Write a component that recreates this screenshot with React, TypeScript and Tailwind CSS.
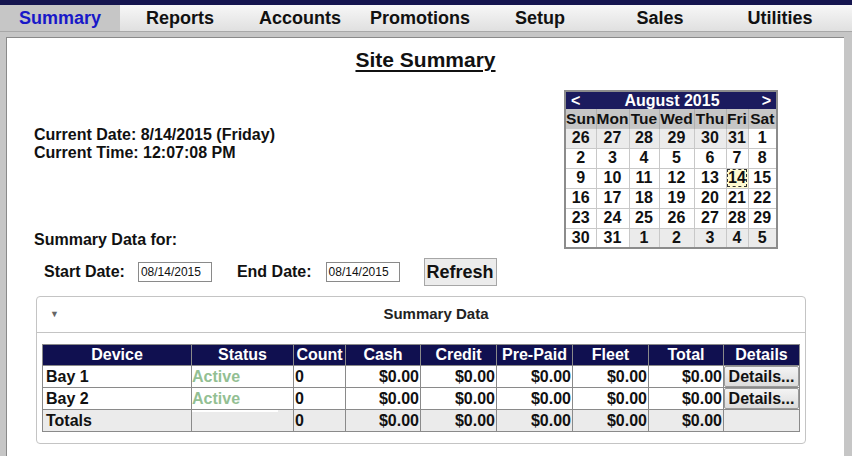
import React from 'react';

const tabs = ['Summary', 'Reports', 'Accounts', 'Promotions', 'Setup', 'Sales', 'Utilities'];

const dayNames = ['Sun', 'Mon', 'Tue', 'Wed', 'Thu', 'Fri', 'Sat'];
const calWidths = ['w-[31px]', 'w-[33px]', 'w-[30px]', 'w-[35px]', 'w-[32px]', 'w-[22px]', 'w-[29px]'];

// [day, otherMonth]
const weeks: [number, boolean][][] = [
  [[26, true], [27, true], [28, true], [29, true], [30, true], [31, true], [1, false]],
  [[2, false], [3, false], [4, false], [5, false], [6, false], [7, false], [8, false]],
  [[9, false], [10, false], [11, false], [12, false], [13, false], [14, false], [15, false]],
  [[16, false], [17, false], [18, false], [19, false], [20, false], [21, false], [22, false]],
  [[23, false], [24, false], [25, false], [26, false], [27, false], [28, false], [29, false]],
  [[30, false], [31, false], [1, true], [2, true], [3, true], [4, true], [5, true]],
];

const columns = [
  { label: 'Device', w: 'w-[149px]' },
  { label: 'Status', w: 'w-[102px]' },
  { label: 'Count', w: 'w-[52px]' },
  { label: 'Cash', w: 'w-[75px]' },
  { label: 'Credit', w: 'w-[76px]' },
  { label: 'Pre-Paid', w: 'w-[76px]' },
  { label: 'Fleet', w: 'w-[76px]' },
  { label: 'Total', w: 'w-[75px]' },
  { label: 'Details', w: 'w-[76px]' },
];

const Calendar: React.FC = () => (
  <table className="border-collapse border-2 border-[#8c8c8c] text-[16px] font-bold leading-none table-fixed">
    <colgroup>
      {calWidths.map((w, i) => (
        <col key={i} className={w} />
      ))}
    </colgroup>
    <tbody>
      <tr className="h-[18px] bg-[#1b1b5e] text-white">
        <td className="pl-[5px] text-left">&lt;</td>
        <td colSpan={5} className="text-center">August 2015</td>
        <td className="pr-[5px] text-right">&gt;</td>
      </tr>
      <tr className="h-[19px] bg-[#c6c6c6] text-[#111] text-[15.5px]">
        {dayNames.map((d) => (
          <td key={d} className="text-center px-0 border-x border-[#b0b0b0] whitespace-nowrap">{d}</td>
        ))}
      </tr>
      {weeks.map((week, wi) => (
        <tr key={wi} className="h-[20px]">
          {week.map(([day, other], di) => {
            const selected = day === 14 && !other;
            return (
              <td
                key={di}
                className={`text-center border border-[#c8c8c8] text-[#111] ${
                  selected
                    ? 'bg-[#fffbd0] outline-1 outline-dashed outline-[#333] -outline-offset-2'
                    : other
                    ? 'bg-[#ebebeb]'
                    : 'bg-white'
                }`}
              >
                {day}
              </td>
            );
          })}
        </tr>
      ))}
    </tbody>
  </table>
);

const BayRow: React.FC<{ name: string }> = ({ name }) => (
  <tr className="h-[22px] bg-white">
    <td className="border border-[#8a8a8a] pl-[3px] text-left">{name}</td>
    <td className="border border-[#8a8a8a] text-left text-[#93bf93]">Active</td>
    <td className="border border-[#8a8a8a] text-left pl-[1px]">0</td>
    {[0, 1, 2, 3, 4].map((i) => (
      <td key={i} className="border border-[#8a8a8a] text-right pr-[1px]">$0.00</td>
    ))}
    <td className="border border-[#8a8a8a] p-0">
      <button className="w-full h-[21px] bg-gradient-to-b from-[#f4f4f4] to-[#dcdcdc] border border-[#9a9a9a] rounded-[2px] font-bold text-[16px] text-[#111] leading-none">
        Details...
      </button>
    </td>
  </tr>
);

export default function App() {
  return (
    <div className="w-[852px] h-[456px] overflow-hidden bg-[#c6c6c6] flex flex-col font-['Liberation_Sans',Arial,sans-serif] text-[#111]">
      {/* top bar */}
      <div className="h-[5px] bg-[#15154f]" />

      {/* tabs */}
      <div className="flex h-[27px] bg-gradient-to-b from-[#f7f7f7] to-[#e0e0e0] border-b border-[#a8a8a8] pr-[12px]">
        {tabs.map((t, i) => (
          <div
            key={t}
            className={`w-[120px] text-center text-[18px] font-bold leading-[26px] ${
              i === 0 ? 'bg-[#c6c6c6] text-[#1818c8]' : 'text-[#111]'
            }`}
          >
            {t}
          </div>
        ))}
      </div>

      {/* frame */}
      <div className="flex-1 pl-[6px] pr-[8px] pt-[5px] min-h-0">
        <div className="h-full bg-white border-l border-t border-[#8a8a8a]">
          <h1 className="text-center text-[21px] font-bold underline underline-offset-[3px] pt-[10px] leading-[24px]">
            Site Summary
          </h1>

          <div className="flex justify-between pr-[66px] mt-[18px]">
            <div className="pl-[27px] text-[16px] font-bold leading-[19px] flex flex-col">
              <div className="mt-[35px]">Current Date: 8/14/2015 (Friday)</div>
              <div className="mt-[-1px]">Current Time: 12:07:08 PM</div>
              <div className="mt-[68px]">Summary Data for:</div>
            </div>
            <Calendar />
          </div>

          {/* date range */}
          <div className="flex items-center pl-[37px] mt-[9px] text-[16px] font-bold">
            <span>Start Date:</span>
            <div className="ml-[13px] w-[74px] h-[20px] border border-[#8a8a8a] text-[12px] font-normal leading-[18px] pl-[2px]">
              08/14/2015
            </div>
            <span className="ml-[25px]">End Date:</span>
            <div className="ml-[14px] w-[74px] h-[20px] border border-[#8a8a8a] text-[12px] font-normal leading-[18px] pl-[2px]">
              08/14/2015
            </div>
            <button className="ml-[24px] w-[73px] h-[28px] bg-[#ececec] border border-[#a6a6a6] text-[18px] font-bold leading-none text-[#111]">
              Refresh
            </button>
          </div>

          {/* summary data panel */}
          <div className="ml-[29px] mt-[10px] w-[770px] h-[148px] border border-[#c4c4c4] rounded-[4px]">
            <div className="flex items-center h-[36px] border-b border-[#c4c4c4]">
              <span className="ml-[13px] text-[#666] text-[9px] leading-none">▼</span>
              <span className="flex-1 text-center text-[15px] font-bold text-[#222] pl-[8px]">Summary Data</span>
            </div>
            <table className="ml-[5px] mt-[11px] border-collapse table-fixed w-[757px] text-[16px] font-bold leading-none">
              <colgroup>
                {columns.map((c) => (
                  <col key={c.label} className={c.w} />
                ))}
              </colgroup>
              <thead>
                <tr className="h-[21px] bg-[#101050] text-white">
                  {columns.map((c) => (
                    <th key={c.label} className="border border-[#8a8a8a] text-center font-bold">
                      {c.label}
                    </th>
                  ))}
                </tr>
              </thead>
              <tbody>
                <BayRow name="Bay 1" />
                <BayRow name="Bay 2" />
                <tr className="h-[22px] bg-[#ebebeb]">
                  <td className="border border-[#8a8a8a] pl-[3px] text-left">Totals</td>
                  <td className="border border-[#8a8a8a] p-0 align-top">
                    <div className="w-[86px] h-[2px] bg-white" />
                  </td>
                  <td className="border border-[#8a8a8a] text-left pl-[1px]">0</td>
                  {[0, 1, 2, 3, 4].map((i) => (
                    <td key={i} className="border border-[#8a8a8a] text-right pr-[1px]">$0.00</td>
                  ))}
                  <td className="border border-[#8a8a8a]" />
                </tr>
              </tbody>
            </table>
          </div>
        </div>
      </div>
    </div>
  );
}
